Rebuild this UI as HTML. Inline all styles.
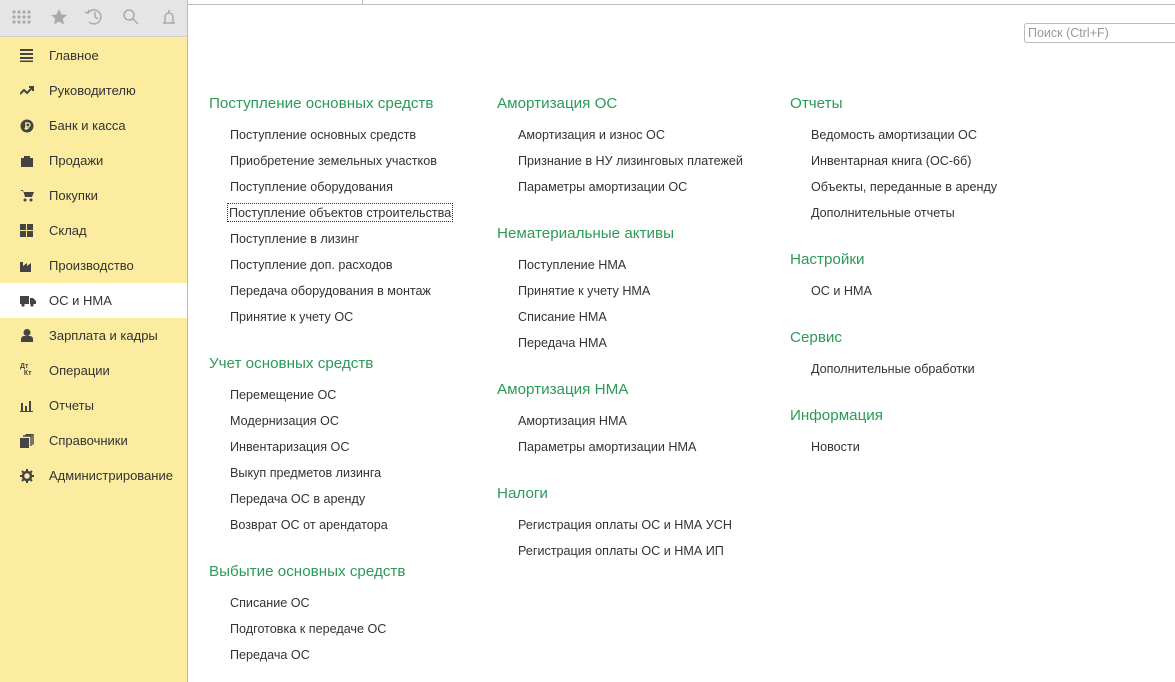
<!DOCTYPE html>
<html><head><meta charset="utf-8"><style>
body{margin:0;width:1175px;height:682px;overflow:hidden;background:#fff;font-family:"Liberation Sans",Arial,sans-serif;position:relative}
.sb{position:absolute;left:0;top:0;width:187px;height:682px;background:#fbeca0;border-right:1px solid #b9b9b9}
.tb{position:absolute;left:0;top:0;width:187px;height:36px;background:#e5e5e5;border-bottom:1px solid #cfcfcf}
.mi{position:absolute;left:0;width:187px;height:35px;line-height:35px;font-size:13px;color:#333}
.mi span{position:absolute;left:49px;top:0}
.mi i{position:absolute;left:20px;top:11px;width:16px;height:14px;font-style:normal;line-height:0;display:block}
.mi i svg{display:block}
.sel{background:#fff}
.t{position:absolute;line-height:16px;white-space:nowrap}
.h{font-size:15.2px;color:#2c9a58}
.l{font-size:12.6px;color:#333}
</style></head><body>
<div style="position:absolute;left:188px;top:4px;width:987px;height:1px;background:#bdbdbd"></div>
<div style="position:absolute;left:362px;top:0;width:1px;height:4px;background:#bdbdbd"></div>
<div class="sb"></div>
<div class="tb">
<svg width="187" height="36" style="position:absolute;left:0;top:0">
<g fill="#aaa">
<circle cx="14" cy="12" r="1.6"/><circle cx="19" cy="12" r="1.6"/><circle cx="24" cy="12" r="1.6"/><circle cx="29" cy="12" r="1.6"/>
<circle cx="14" cy="17" r="1.6"/><circle cx="19" cy="17" r="1.6"/><circle cx="24" cy="17" r="1.6"/><circle cx="29" cy="17" r="1.6"/>
<circle cx="14" cy="22" r="1.6"/><circle cx="19" cy="22" r="1.6"/><circle cx="24" cy="22" r="1.6"/><circle cx="29" cy="22" r="1.6"/>
<polygon points="59,9 61.5,14.5 67,15 62.8,18.8 64,24.5 59,21.5 54,24.5 55.2,18.8 51,15 56.5,14.5"/>
</g>
<g fill="none" stroke="#aaa" stroke-width="1.5">
<path d="M88 13 A7 7 0 1 1 89 22"/><path d="M95 12v5l3 2"/><path d="M85 12l3 1 1-3"/>
<circle cx="129" cy="15" r="5"/><path d="M133 19l5 5"/>
<path d="M163 23h12M165 23v-6a4 4 0 0 1 8 0v6M169 10v3"/>
</g></svg></div>
<div class="mi" style="top:38px"><i><svg width="14" height="13"><path d="M0 1h13M0 5h13M0 9h13M0 12.5h13" stroke="#444" stroke-width="2"/></svg></i><span>Главное</span></div>
<div class="mi" style="top:73px"><i><svg width="14" height="13"><path d="M0 10l4-4 3 3 5-5M9 3h4v4" stroke="#444" stroke-width="2" fill="none"/></svg></i><span>Руководителю</span></div>
<div class="mi" style="top:108px"><i><svg width="14" height="14"><circle cx="7" cy="7" r="6.5" fill="#444"/><path d="M6 4v7M5 4h3a2 2 0 0 1 0 4H5M4.5 9.5h4" stroke="#fbeca0" stroke-width="1.3" fill="none"/></svg></i><span>Банк и касса</span></div>
<div class="mi" style="top:143px"><i><svg width="14" height="13"><path d="M1 4h12v9H1zM4 4V2h6v2" fill="#444"/></svg></i><span>Продажи</span></div>
<div class="mi" style="top:178px"><i><svg width="14" height="13"><path d="M0 1h3l2 7h7l2-5H4" fill="#444"/><circle cx="5" cy="11" r="1.5" fill="#444"/><circle cx="11" cy="11" r="1.5" fill="#444"/></svg></i><span>Покупки</span></div>
<div class="mi" style="top:213px"><i><svg width="14" height="13"><path d="M0 0h6v6H0zM7 0h6v6H7zM0 7h6v6H0zM7 7h6v6H7z" fill="#444"/></svg></i><span>Склад</span></div>
<div class="mi" style="top:248px"><i><svg width="14" height="13"><path d="M0 13V3h3v4l4-3v3l4-3v9z" fill="#444"/></svg></i><span>Производство</span></div>
<div class="mi sel" style="top:283px"><i><svg width="16" height="13"><path d="M0 2h9v8H0zM10 4h3l3 3v3h-6z" fill="#444"/><circle cx="3" cy="11" r="1.6" fill="#444"/><circle cx="12" cy="11" r="1.6" fill="#444"/></svg></i><span>ОС и НМА</span></div>
<div class="mi" style="top:318px"><i><svg width="14" height="13"><circle cx="7" cy="3.5" r="3.5" fill="#444"/><path d="M1 13v-3a3 3 0 0 1 3-3h6a3 3 0 0 1 3 3v3z" fill="#444"/></svg></i><span>Зарплата и кадры</span></div>
<div class="mi" style="top:353px"><i style="font-size:7px;line-height:7px;color:#444;font-weight:bold;top:10px">Дт<br>&nbsp;&nbsp;Кт</i><span>Операции</span></div>
<div class="mi" style="top:388px"><i><svg width="14" height="13"><path d="M1 4h2v8H1zM5 7h2v5H5zM9 2h2v10H9zM0 12h13v1H0z" fill="#444"/></svg></i><span>Отчеты</span></div>
<div class="mi" style="top:423px"><i><svg width="14" height="14"><path d="M0 4h9v10H0z" fill="#444"/><path d="M3 2h8v10" stroke="#444" stroke-width="1.4" fill="none"/><path d="M5.5 0.7h7.5v10" stroke="#444" stroke-width="1.4" fill="none"/></svg></i><span>Справочники</span></div>
<div class="mi" style="top:458px"><i><svg width="14" height="14"><circle cx="7" cy="7" r="4" fill="none" stroke="#444" stroke-width="2.5"/><path d="M7 0v3M7 11v3M0 7h3M11 7h3M2 2l2 2M10 10l2 2M12 2l-2 2M2 12l2-2" stroke="#444" stroke-width="2"/></svg></i><span>Администрирование</span></div>

<div style="position:absolute;left:1024px;top:23px;width:160px;height:20px;border:1px solid #bbb;border-radius:3px;box-sizing:border-box;font-size:12.5px;color:#999;line-height:18px;padding-left:3px">Поиск (Ctrl+F)</div>

<div class="t h" style="left:209px;top:96px">Поступление основных средств</div>
<div class="t l" style="left:230px;top:127px">Поступление основных средств</div>
<div class="t l" style="left:230px;top:153px">Приобретение земельных участков</div>
<div class="t l" style="left:230px;top:179px">Поступление оборудования</div>
<div class="t l" style="left:228px;top:204px;outline:1px dotted #333;padding:0 1px;height:17px;line-height:18px">Поступление объектов строительства</div>
<div class="t l" style="left:230px;top:231px">Поступление в лизинг</div>
<div class="t l" style="left:230px;top:257px">Поступление доп. расходов</div>
<div class="t l" style="left:230px;top:283px">Передача оборудования в монтаж</div>
<div class="t l" style="left:230px;top:309px">Принятие к учету ОС</div>
<div class="t h" style="left:209px;top:356px">Учет основных средств</div>
<div class="t l" style="left:230px;top:387px">Перемещение ОС</div>
<div class="t l" style="left:230px;top:413px">Модернизация ОС</div>
<div class="t l" style="left:230px;top:439px">Инвентаризация ОС</div>
<div class="t l" style="left:230px;top:465px">Выкуп предметов лизинга</div>
<div class="t l" style="left:230px;top:491px">Передача ОС в аренду</div>
<div class="t l" style="left:230px;top:517px">Возврат ОС от арендатора</div>
<div class="t h" style="left:209px;top:564px">Выбытие основных средств</div>
<div class="t l" style="left:230px;top:595px">Списание ОС</div>
<div class="t l" style="left:230px;top:621px">Подготовка к передаче ОС</div>
<div class="t l" style="left:230px;top:647px">Передача ОС</div>

<div class="t h" style="left:497px;top:96px">Амортизация ОС</div>
<div class="t l" style="left:518px;top:127px">Амортизация и износ ОС</div>
<div class="t l" style="left:518px;top:153px">Признание в НУ лизинговых платежей</div>
<div class="t l" style="left:518px;top:179px">Параметры амортизации ОС</div>
<div class="t h" style="left:497px;top:226px">Нематериальные активы</div>
<div class="t l" style="left:518px;top:257px">Поступление НМА</div>
<div class="t l" style="left:518px;top:283px">Принятие к учету НМА</div>
<div class="t l" style="left:518px;top:309px">Списание НМА</div>
<div class="t l" style="left:518px;top:335px">Передача НМА</div>
<div class="t h" style="left:497px;top:382px">Амортизация НМА</div>
<div class="t l" style="left:518px;top:413px">Амортизация НМА</div>
<div class="t l" style="left:518px;top:439px">Параметры амортизации НМА</div>
<div class="t h" style="left:497px;top:486px">Налоги</div>
<div class="t l" style="left:518px;top:517px">Регистрация оплаты ОС и НМА УСН</div>
<div class="t l" style="left:518px;top:543px">Регистрация оплаты ОС и НМА ИП</div>

<div class="t h" style="left:790px;top:96px">Отчеты</div>
<div class="t l" style="left:811px;top:127px">Ведомость амортизации ОС</div>
<div class="t l" style="left:811px;top:153px">Инвентарная книга (ОС-6б)</div>
<div class="t l" style="left:811px;top:179px">Объекты, переданные в аренду</div>
<div class="t l" style="left:811px;top:205px">Дополнительные отчеты</div>
<div class="t h" style="left:790px;top:252px">Настройки</div>
<div class="t l" style="left:811px;top:283px">ОС и НМА</div>
<div class="t h" style="left:790px;top:330px">Сервис</div>
<div class="t l" style="left:811px;top:361px">Дополнительные обработки</div>
<div class="t h" style="left:790px;top:408px">Информация</div>
<div class="t l" style="left:811px;top:439px">Новости</div>
</body></html>
